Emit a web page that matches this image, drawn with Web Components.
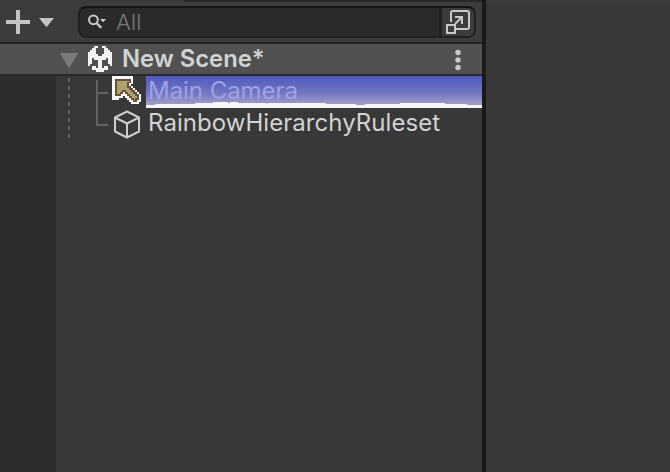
<!DOCTYPE html>
<html lang="en"><head><meta charset="utf-8"><title>Hierarchy</title>
<style>html,body{margin:0;height:100%;background:#383838;overflow:hidden}body{font-family:Inter,"Liberation Sans",sans-serif;color:#d2d2d2}</style></head>
<body><editor-window></editor-window>
<script>
const define=(name,html)=>customElements.define(name,class extends HTMLElement{
 constructor(){super();this.attachShadow({mode:'open'}).innerHTML='<style>*{box-sizing:border-box}svg{display:block;flex:none}</style>'+html;}
});
// Turns rows of '#' cells into one path of 2px squares.
const pixels=rows=>rows.map((r,y)=>[...r].map((c,x)=>c==='#'?`M${x*2} ${y*2}h2v2h-2z`:'').join('')).join('');
const logo=pixels([
'...##..##...',
'..##....##..',
'.###....###.',
'####....####',
'#####..#####',
'############',
'##.######.##',
'##...##...##',
'##...##...##',
'#....##....#',
'..##.##.##..',
'..########..',
'....####....']);
define('search-field',`<style>
:host{display:flex;box-sizing:border-box;width:398px;height:32px;border:2px solid #212121;border-top-color:#141414;border-radius:8px;background:#2a2a2a;overflow:hidden;align-items:center}
.lens{margin-left:8px}.q{flex:1;margin-left:9px;font-size:22px;line-height:28px;color:#797979;letter-spacing:.1px;font-weight:300}
.open{width:35px;height:28px;background:#3c3c3c;border-left:3px solid #212121}
</style><svg class="lens" width="19" height="16" viewBox="0 0 19 16"><g fill="none" stroke="#c8c8c8"><circle cx="5.4" cy="5.8" r="4.4" stroke-width="2"/><path d="M8.5 9l4.8 4.8" stroke-width="2.4"/></g><path d="M12 5h6.2l-3.1 3.3z" fill="#c8c8c8"/></svg>
<span class="q"><slot></slot></span><span class="open"><svg width="32" height="28" viewBox="0 0 32 28" fill="none" stroke="#c8c8c8" stroke-width="2"><path d="M9 14V5q0-2 2-2h14q2 0 2 2v14q0 2-2 2H14M5 17h8v8H5zM13 16l7-7M13 9h7v7"/></svg></span>`);
define('tool-bar',`<style>:host{display:flex;height:44px;background:#3c3c3c;border-bottom:2px solid #232323;box-sizing:border-box;padding:6px 6px 0 6px;background-image:linear-gradient(#272727,#272727);background-repeat:no-repeat;background-size:298px 2px;background-position:184px 0}
.add{margin-top:4px}.caret{margin:12px 24px 0 9px}</style>
<svg class="add" width="24" height="24"><path d="M12 0v24M0 12h24" stroke="#c4c4c4" stroke-width="4"/></svg>
<svg class="caret" width="15" height="10"><path d="M0 0h15L7.5 9.3z" fill="#c4c4c4"/></svg><search-field>All</search-field>`);
define('scene-header',`<style>:host{display:flex;height:32px;box-sizing:border-box;background:#515151;border-bottom:2px solid #2a2a2a;padding-left:60px;font-size:23.8px;line-height:29px;font-weight:600}
.fold{margin-top:9px}.logo{margin:2px 0 0 10px}.name{margin-left:10px;flex:1;white-space:nowrap}.menu{margin:5px 21px 0 0}</style>
<svg class="fold" width="18" height="16"><path d="M0 0h18L9 15.5z" fill="#7a7a7a"/></svg>
<svg class="logo" width="24" height="26" shape-rendering="crispEdges"><path fill="#f4f4f4" d="${logo}"/></svg>
<span class="name"><slot></slot></span><svg class="menu" width="6" height="22" fill="#c9c9c9"><circle cx="3" cy="3.5" r="2.7"/><circle cx="3" cy="11" r="2.7"/><circle cx="3" cy="18.5" r="2.7"/></svg>`);
define('tree-item',`<style>:host{display:flex;height:32px;padding-left:112px;font-size:24px;line-height:29px;box-sizing:border-box;font-weight:400}
::slotted(svg){display:block;flex:none;width:34px;height:32px}
.label{flex:1;padding-left:2px;white-space:nowrap;letter-spacing:.05px}
:host([featured]) .label{letter-spacing:-.05px;color:#9da2e6;background:linear-gradient(#5059bf,#7377c2 55%,#9b9bc6 85%,#a2a2c8);position:relative}
.text{position:relative}.snow{position:absolute;left:0;bottom:0;display:none}:host([featured]) .snow{display:block}</style>
<slot name="icon"></slot><span class="label"><svg class="snow" width="336" height="6" shape-rendering="crispEdges"><path fill="#f5f5f7" d="M0 3h9v-1h40v-1h18V0h15v1h2V0h8v1h28v1h1v-1h59v1h30v1h9v-1h35v-1h45v1h22v1h15v3H0z"/></svg><span class="text"><slot></slot></span></span>`);
define('tree-view',`<style>:host{display:grid;grid-template-columns:56px 1fr;flex:1;background:#383838}.gutter{background:#2d2d2d;grid-area:1/1}.rows{grid-area:1/1/2/3;position:relative}.guides{position:absolute;left:66px;top:0}</style>
<div class="gutter"></div><div class="rows"><svg class="guides" width="44" height="64" fill="none" stroke="#626262" stroke-width="2" shape-rendering="crispEdges"><path stroke-dasharray="4 4" d="M3 2v62"/><path d="M31 4v46M31 17h11M30 49h12"/></svg>
<tree-item featured><svg slot="icon" viewBox="0 0 34 32" shape-rendering="crispEdges"><path fill="#fafafa" d="M0 0H21V8H19V10H21V12H23V14H25V16H27V18H29V26H27V28H19V26H17V24H15V22H13V20H11V22H7V24H0z"/><path fill="#6c4d3e" d="M3 3H19V7H17V10H19V12H21V14H23V16H25V18H27V24H25V26H21V24H19V22H17V20H15V18H13V16H11V18H9V20H3z"/><path fill="#aaa46b" d="M5 5H17V6H15V12H17V14H19V16H21V18H23V20H25V22H23V24H22V22H20V20H18V18H16V16H14V14H10V16H8V18H5z"/></svg>Main Camera</tree-item>
<tree-item><svg slot="icon" viewBox="0 0 34 32" fill="none" stroke="#cecece" stroke-width="2" stroke-linejoin="round"><path d="M15 3.5l12 6v14l-12 6-12-6v-14zM3 9.5l12 6 12-6M15 15.5v14"/></svg>RainbowHierarchyRuleset</tree-item></div>`);
define('hierarchy-panel',`<style>:host{display:flex;flex-direction:column;width:486px;box-sizing:border-box;border-right:4px solid #191919;height:472px}</style><tool-bar></tool-bar><scene-header>New Scene*</scene-header><tree-view></tree-view>`);
define('editor-window',`<style>:host{display:flex;width:670px;height:472px;background:#383838}.side{flex:1;border-top:2px solid #3c3c3c}</style><hierarchy-panel></hierarchy-panel><div class="side"></div>`);
</script></body></html>
